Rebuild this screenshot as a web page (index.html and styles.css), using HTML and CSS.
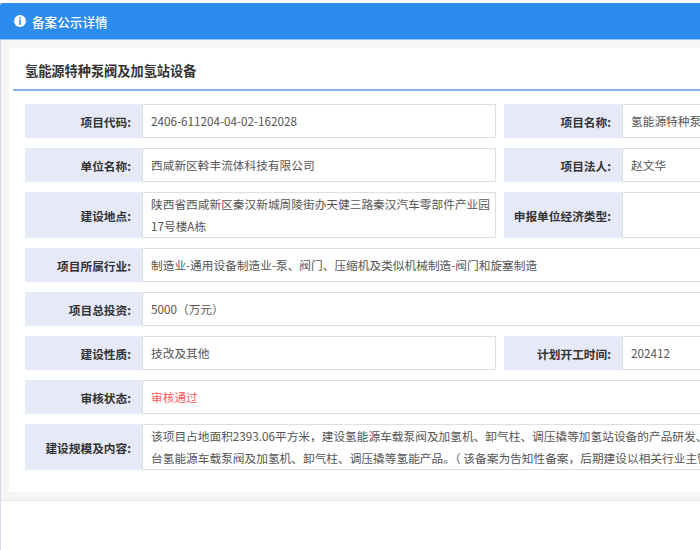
FILE: index.html
```html
<!DOCTYPE html>
<html lang="zh-CN">
<head>
<meta charset="utf-8">
<title>备案公示详情</title>
<link rel="stylesheet" href="styles.css">
</head>
<body>
<div class="panel">
  <div class="panel-head">
    <svg class="info-icon" width="12" height="12" viewBox="0 0 12 12"><circle cx="6" cy="6" r="6" fill="#fff"/><rect x="5.2" y="2.3" width="1.6" height="1.6" fill="#2b8ced"/><rect x="5.2" y="4.8" width="1.6" height="5" fill="#2b8ced"/></svg>
    <span class="panel-title">备案公示详情</span>
  </div>
  <div class="panel-body">
    <div class="card">
      <div class="card-title"><h2>氢能源特种泵阀及加氢站设备</h2></div>
      <div class="rows">
        <div class="row">
          <div class="pair">
            <div class="label">项目代码:</div>
            <div class="value">2406-611204-04-02-162028</div>
          </div>
          <div class="pair pair-right">
            <div class="label">项目名称:</div>
            <div class="value">氢能源特种泵阀及加氢站设备</div>
          </div>
        </div>
        <div class="row">
          <div class="pair">
            <div class="label">单位名称:</div>
            <div class="value">西咸新区斡丰流体科技有限公司</div>
          </div>
          <div class="pair pair-right">
            <div class="label">项目法人:</div>
            <div class="value">赵文华</div>
          </div>
        </div>
        <div class="row">
          <div class="pair">
            <div class="label">建设地点:</div>
            <div class="value">陕西省西咸新区秦汉新城周陵街办天健三路秦汉汽车零部件产业园17号楼A栋</div>
          </div>
          <div class="pair pair-right">
            <div class="label">申报单位经济类型:</div>
            <div class="value"></div>
          </div>
        </div>
        <div class="row">
          <div class="pair pair-full">
            <div class="label">项目所属行业:</div>
            <div class="value">制造业-通用设备制造业-泵、阀门、压缩机及类似机械制造-阀门和旋塞制造</div>
          </div>
        </div>
        <div class="row">
          <div class="pair pair-full">
            <div class="label">项目总投资:</div>
            <div class="value">5000（万元）</div>
          </div>
        </div>
        <div class="row">
          <div class="pair">
            <div class="label">建设性质:</div>
            <div class="value">技改及其他</div>
          </div>
          <div class="pair pair-right">
            <div class="label">计划开工时间:</div>
            <div class="value">202412</div>
          </div>
        </div>
        <div class="row">
          <div class="pair pair-full">
            <div class="label">审核状态:</div>
            <div class="value status">审核通过</div>
          </div>
        </div>
        <div class="row">
          <div class="pair pair-full">
            <div class="label">建设规模及内容:</div>
            <div class="value"><p class="lines">该项目占地面积2393.06平方米，建设氢能源车载泵阀及加氢机、卸气柱、调压撬等加氢站设备的产品研发、生产线，项目建成后可年产500<br>台氢能源车载泵阀及加氢机、卸气柱、调压撬等氢能产品。（ 该备案为告知性备案，后期建设以相关行业主管部门审批为准。）</p></div>
          </div>
        </div>
      </div>
    </div>
  </div>
  <div class="panel-foot"></div>
</div>
</body>
</html>
```
FILE: styles.css
```css
html, body {
  margin: 0;
  padding: 0;
  background: #fff;
  overflow: hidden;
}
body {
  font-family: "Noto Sans CJK SC", "Noto Sans", sans-serif;
  color: #333;
  width: 700px;
  height: 550px;
  padding-top: 3px;
  box-sizing: border-box;
}
.panel {
  width: 1100px;
  border-left: 1px solid #d3deec;
  min-height: 547px;
}
.panel-head {
  height: 36px;
  background: #2b8ced;
  border-bottom: 1px solid #9cc6f2;
  display: flex;
  align-items: center;
  padding-left: 14px;
  margin-left: -1px;
  border-top-left-radius: 3px;
}
.info-icon {
  display: block;
  margin-right: 6px;
}
.panel-title {
  color: #fff;
  font-size: 12.6px;
  font-weight: 500;
}
.panel-body {
  background: #f6f6f6;
  padding: 8px 0 8px 8px;
  border-bottom: 1px solid #e6e6e6;
}
.card {
  background: #fff;
  padding: 0 4px 22px 4px;
}
.card-title {
  border-bottom: 2px solid #86b4e8;
  height: 41px;
  display: flex;
  align-items: center;
  padding-left: 12px;
}
.card-title h2 {
  margin: 0;
  font-size: 13.2px;
  font-weight: 600;
  color: #333;
  padding-top: 4px;
}
.rows {
  padding: 13px 0 0 12px;
  display: flex;
  flex-direction: column;
  gap: 10px;
}
.row {
  display: flex;
}
.pair {
  display: flex;
  width: 471px;
  margin-right: 8px;
}
.pair-right {
  width: 500px;
  margin-right: 0;
}
.pair-full {
  width: 979px;
  margin-right: 0;
}
.label {
  width: 117px;
  flex: none;
  background: #e5e9f8;
  font-size: 11.7px;
  font-weight: 600;
  color: #333;
  display: flex;
  align-items: center;
  justify-content: flex-end;
  padding-right: 11px;
  box-sizing: border-box;
  min-height: 34px;
}
.pair-right .label {
  width: 118px;
}
.value {
  flex: 1;
  min-width: 0;
  border: 1px solid #dedede;
  font-size: 11.7px;
  color: #555;
  line-height: 22px;
  padding: 0 2px 0 8px;
  min-height: 32px;
  display: flex;
  align-items: center;
}
.status {
  color: #ff5b5b;
}
.lines {
  margin: 0;
  white-space: nowrap;
}
.panel-foot {
  height: 50px;
}
```
